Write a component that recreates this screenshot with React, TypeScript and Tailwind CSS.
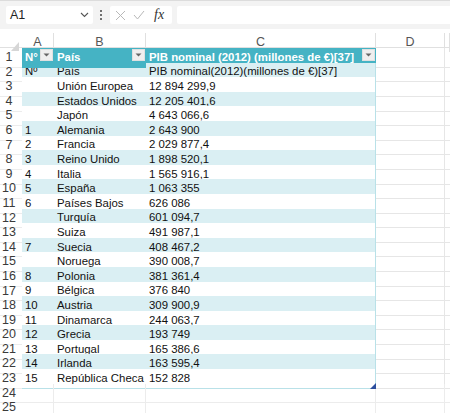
import React from 'react';

type Row = [string, string, string];

const rows: Row[] = [
  ['Nº', 'País', 'PIB nominal(2012)(millones de €)[37]'],
  ['', 'Unión Europea', '12 894 299,9'],
  ['', 'Estados Unidos', '12 205 401,6'],
  ['', 'Japón', '4 643 066,6'],
  ['1', 'Alemania', '2 643 900'],
  ['2', 'Francia', '2 029 877,4'],
  ['3', 'Reino Unido', '1 898 520,1'],
  ['4', 'Italia', '1 565 916,1'],
  ['5', 'España', '1 063 355'],
  ['6', 'Países Bajos', '626 086'],
  ['', 'Turquía', '601 094,7'],
  ['', 'Suiza', '491 987,1'],
  ['7', 'Suecia', '408 467,2'],
  ['', 'Noruega', '390 008,7'],
  ['8', 'Polonia', '381 361,4'],
  ['9', 'Bélgica', '376 840'],
  ['10', 'Austria', '309 900,9'],
  ['11', 'Dinamarca', '244 063,7'],
  ['12', 'Grecia', '193 749'],
  ['13', 'Portugal', '165 386,6'],
  ['14', 'Irlanda', '163 595,4'],
  ['15', 'República Checa', '152 828'],
];

const cols = 'grid grid-cols-[22px_32px_92px_230px_69px_1fr]';

const FilterButton: React.FC = () => (
  <div className="absolute right-[1px] top-[1px] w-[13px] h-[12px] bg-[#efefef] border border-[#e0e0e0] flex items-center justify-center">
    <svg width="7" height="4" viewBox="0 0 7 4">
      <path d="M0.5 0.5 L6.5 0.5 L3.5 3.5 Z" fill="#666" />
    </svg>
  </div>
);

const RowNum: React.FC<{ n: number }> = ({ n }) => (
  <div className="flex items-center justify-center pr-[4px] text-[12.5px] text-[#3a3a3a] border-b border-[#ececec]">
    {n}
  </div>
);

const App: React.FC = () => {
  return (
    <div className="w-[450px] h-[413px] overflow-hidden bg-white text-[#111] font-['Liberation_Sans',Arial,sans-serif]">
      {/* formula bar */}
      <div className="h-[29px] bg-[#f3f3f3] border-t border-[#dcdcdc] flex items-center">
        <div className="ml-[6px] w-[87px] h-[18px] bg-white rounded-[2px] flex items-center justify-between px-[4px]">
          <span className="text-[12.5px] text-[#222]">A1</span>
          <svg width="9" height="6" viewBox="0 0 9 6">
            <path d="M1 1 L4.5 4.5 L8 1" fill="none" stroke="#555" strokeWidth="1.1" />
          </svg>
        </div>
        <div className="ml-[7px] flex flex-col gap-[2px]">
          <span className="w-[2px] h-[2px] bg-[#444] rounded-full" />
          <span className="w-[2px] h-[2px] bg-[#444] rounded-full" />
          <span className="w-[2px] h-[2px] bg-[#444] rounded-full" />
        </div>
        <div className="ml-[8px] w-[62px] h-[18px] bg-white rounded-[2px] flex items-center px-[5px] gap-[7px]">
          <svg width="11" height="11" viewBox="0 0 11 11">
            <path d="M1 1 L10 10 M10 1 L1 10" stroke="#b8b8b8" strokeWidth="1" />
          </svg>
          <svg width="12" height="10" viewBox="0 0 12 10">
            <path d="M1 5 L4.5 9 L11 1" fill="none" stroke="#b8b8b8" strokeWidth="1" />
          </svg>
          <span className="ml-[2px] text-[14px] italic text-[#333] font-['Liberation_Serif',serif] leading-none">fx</span>
        </div>
        <div className="ml-[5px] flex-1 h-[18px] bg-white rounded-l-[2px]" />
      </div>

      <div className="h-[4px]" />

      {/* column headers */}
      <div className={`${cols} h-[15px] border-b border-[#e0e0e0]`}>
        <div className="relative">
          <svg className="absolute right-[3px] bottom-[1px]" width="8" height="9" viewBox="0 0 8 9">
            <path d="M8 0 L8 9 L0 9 Z" fill="#d6d6d6" />
          </svg>
        </div>
        {['A', 'B', 'C', 'D', ''].map((l, i) => (
          <div
            key={i}
            className="flex items-center justify-center text-[12.5px] text-[#555] border-r border-[#e0e0e0]"
          >
            {l}
          </div>
        ))}
      </div>

      {/* row 1: table header */}
      <div className={`${cols} h-[14.6px]`}>
        <RowNum n={1} />
        <div className="relative bg-[#45b3c4] text-white font-bold text-[11.4px] flex items-center pl-[3px]">
          N°
          <FilterButton />
        </div>
        <div className="relative bg-[#45b3c4] text-white font-bold text-[11.4px] flex items-center pl-[3px]">
          País
          <FilterButton />
        </div>
        <div className="relative bg-[#45b3c4] text-white font-bold text-[11.4px] flex items-center pl-[3px] whitespace-nowrap">
          PIB nominal (2012) (millones de €)[37]
          <FilterButton />
        </div>
        <div className="border-b border-r border-[#e6e6e6]" />
        <div className="border-b border-[#e6e6e6]" />
      </div>

      {/* table body */}
      {rows.map((r, i) => {
        const n = i + 2;
        const band = n % 2 === 0 ? 'bg-[#daeff3]' : 'bg-white';
        const last = i === rows.length - 1;
        return (
          <div key={n} className={`${cols} h-[14.6px]`}>
            <RowNum n={n} />
            <div className={`${band} border-b border-[#b9e1e8] text-[11.4px] flex items-center pl-[3px] whitespace-nowrap`}>
              {r[0]}
            </div>
            <div className={`${band} border-b border-[#b9e1e8] text-[11.4px] flex items-center pl-[3px] whitespace-nowrap`}>
              {r[1]}
            </div>
            <div className={`${band} relative border-b border-r border-[#b9e1e8] text-[11.4px] flex items-center pl-[3px] whitespace-nowrap`}>
              {r[2]}
              {last && (
                <svg className="absolute right-[-1px] bottom-[-1px]" width="6" height="6" viewBox="0 0 6 6">
                  <path d="M6 0 L6 6 L0 6 Z" fill="#2d4f9e" />
                </svg>
              )}
            </div>
            <div className="border-b border-r border-[#e6e6e6]" />
            <div className="border-b border-[#e6e6e6]" />
          </div>
        );
      })}

      {/* empty rows */}
      {[24, 25].map((n) => (
        <div key={n} className={`${cols} h-[14.6px]`}>
          <RowNum n={n} />
          <div className="border-b border-r border-[#ececec]" />
          <div className="border-b border-r border-[#ececec]" />
          <div className="border-b border-r border-[#ececec]" />
          <div className="border-b border-r border-[#ececec]" />
          <div className="border-b border-[#ececec]" />
        </div>
      ))}
    </div>
  );
};

export default App;
